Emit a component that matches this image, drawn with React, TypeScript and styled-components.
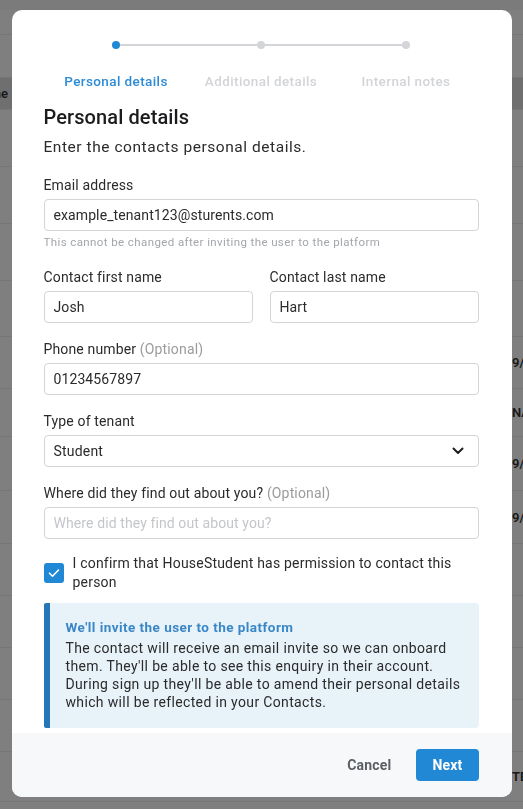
import React from 'react';
import styled, { createGlobalStyle } from 'styled-components';

const GlobalStyle = createGlobalStyle`
  html, body {
    margin: 0;
    padding: 0;
    height: 100%;
    overflow: hidden;
  }
  body {
    font-family: Roboto, "Liberation Sans", Arial, sans-serif;
    background: #ffffff;
    -webkit-font-smoothing: antialiased;
  }
  * {
    box-sizing: border-box;
  }
`;

const ACCENT = '#2188d6';
const LIGHT = '#d4d5d9';

// ---- backdrop page (seen dimmed behind the modal) ----

const Page = styled.div`
  display: flex;
  flex-direction: column;
  width: 523px;
  height: 809px;
  background: #ffffff;
`;

const PageHeader = styled.div`
  height: 10px;
  background: #0f0f0f08;
`;

const PageRow = styled.div<{ $h: number; $shade?: boolean }>`
  display: flex;
  align-items: center;
  justify-content: space-between;
  height: ${({ $h }) => $h}px;
  border-bottom: 1px solid #ececec;
  background: ${({ $shade }) => ($shade ? '#dedede' : '#ffffff')};
  font-size: 13px;
  font-weight: 600;
  color: #333;
`;

const EdgeLeft = styled.div`
  width: 8px;
  overflow: hidden;
  display: flex;
  justify-content: flex-end;
  white-space: nowrap;
`;

const EdgeRight = styled.div`
  width: 11px;
  overflow: hidden;
  white-space: nowrap;
`;

const Dim = styled.div`
  position: fixed;
  inset: 0;
  background: rgba(0, 0, 0, 0.5);
  display: flex;
  justify-content: center;
  align-items: flex-start;
  padding-top: 10px;
`;

// ---- modal ----

const Modal = styled.div`
  width: 500px;
  height: 787px;
  background: #ffffff;
  border-radius: 10px;
  overflow: hidden;
  display: flex;
  flex-direction: column;
  color: #2b2b2b;
`;

const Body = styled.div`
  flex: 1;
  padding: 31px 33px 5px 32px;
  display: flex;
  flex-direction: column;
`;

const Stepper = styled.div`
  position: relative;
  display: grid;
  grid-template-columns: repeat(3, 1fr);

  &::before {
    content: '';
    position: absolute;
    left: 16.66%;
    right: 16.66%;
    top: 3px;
    height: 2px;
    background: ${LIGHT};
  }
`;

const Step = styled.div`
  display: flex;
  flex-direction: column;
  align-items: center;
  gap: 24px;
`;

const Dot = styled.span<{ $active?: boolean }>`
  position: relative;
  width: 8px;
  height: 8px;
  border-radius: 50%;
  background: ${({ $active }) => ($active ? ACCENT : LIGHT)};
`;

const StepLabel = styled.span<{ $active?: boolean }>`
  font-size: 13.5px;
  line-height: 16px;
  font-weight: 500;
  letter-spacing: 0.4px;
  white-space: nowrap;
  color: ${({ $active }) => ($active ? '#2d8bd6' : '#d2d4d8')};
`;

const Heading = styled.h2`
  margin: 16px 0 0;
  font-size: 20px;
  line-height: 24px;
  font-weight: 500;
  color: #1c1c1e;
  letter-spacing: 0.1px;
`;

const Subtitle = styled.p`
  margin: 8px 0 0;
  font-size: 15.5px;
  line-height: 20px;
  letter-spacing: 0.55px;
  color: #2b2b2b;
`;

const Form = styled.div`
  margin-top: 19px;
  display: flex;
  flex-direction: column;
`;

const Field = styled.div<{ $gap?: number }>`
  display: flex;
  flex-direction: column;
  margin-top: ${({ $gap }) => $gap ?? 0}px;
  flex: 1;
`;

const TwoCols = styled.div`
  display: flex;
  gap: 17px;
  margin-top: 19px;
`;

const Label = styled.label`
  font-size: 14px;
  line-height: 18px;
  letter-spacing: 0.15px;
  color: #2b2b2b;
  margin-bottom: 5px;
`;

const Optional = styled.span`
  color: #9b9b9b;
`;

const Input = styled.input`
  height: 32px;
  width: 100%;
  border: 1px solid #d4d5d9;
  border-radius: 4px;
  padding: 0 9px;
  font-family: inherit;
  font-size: 14px;
  letter-spacing: 0.1px;
  color: #2b2b2b;
  background: #fff;
  outline: none;

  &::placeholder {
    color: #c4c6ca;
  }
`;

const Helper = styled.span`
  margin-top: 4px;
  font-size: 11.5px;
  line-height: 14px;
  letter-spacing: 0.4px;
  color: #a3a6ab;
`;

const Select = styled.div`
  height: 32px;
  border: 1px solid #d4d5d9;
  border-radius: 4px;
  padding: 0 14px 0 9px;
  display: flex;
  align-items: center;
  justify-content: space-between;
  font-size: 14px;
  letter-spacing: 0.2px;
  color: #2b2b2b;
`;

const CheckRow = styled.div`
  margin-top: 15px;
  display: flex;
  align-items: center;
  gap: 9px;
`;

const Box = styled.span`
  flex: none;
  width: 20px;
  height: 20px;
  border-radius: 3px;
  background: ${ACCENT};
  display: flex;
  align-items: center;
  justify-content: center;
`;

const CheckText = styled.span`
  font-size: 14px;
  line-height: 19px;
  letter-spacing: 0.2px;
  color: #2b2b2b;
`;

const Notice = styled.div`
  margin-top: 11px;
  background: #e8f2f9;
  border-left: 6px solid #2577b8;
  border-radius: 2px 4px 4px 2px;
  padding: 15px 16px 17px 16px;
`;

const NoticeTitle = styled.div`
  font-size: 13.5px;
  line-height: 18px;
  font-weight: 700;
  letter-spacing: 0.45px;
  color: #3a87c7;
`;

const NoticeBody = styled.p`
  margin: 3px 0 0;
  font-size: 14px;
  line-height: 18px;
  letter-spacing: 0.35px;
  color: #2b2b2b;
`;

const Footer = styled.div`
  height: 64px;
  background: #f7f8fa;
  display: flex;
  align-items: center;
  justify-content: flex-end;
  gap: 9px;
  padding-right: 33px;
`;

const Button = styled.button<{ $primary?: boolean }>`
  height: 32px;
  border: none;
  border-radius: 4px;
  padding: 0 16px;
  font-family: inherit;
  font-size: 14px;
  font-weight: 700;
  letter-spacing: 0.2px;
  cursor: pointer;
  background: ${({ $primary }) => ($primary ? ACCENT : 'transparent')};
  color: ${({ $primary }) => ($primary ? '#ffffff' : '#5b5e63')};
`;

const backdropRows: { h: number; left?: string; right?: string; shade?: boolean }[] = [
  { h: 25 },
  { h: 43 },
  { h: 32, left: 'Name', shade: true },
  { h: 57 },
  { h: 57 },
  { h: 57 },
  { h: 56 },
  { h: 52, right: '9/08/2023' },
  { h: 48, right: 'NA' },
  { h: 54, right: '9/08/2023' },
  { h: 53, right: '9/08/2023' },
  { h: 52 },
  { h: 52 },
  { h: 52 },
  { h: 52 },
  { h: 50, right: 'TENANT' },
];

const Chevron = () => (
  <svg width="12" height="8" viewBox="0 0 12 8" fill="none">
    <path d="M1.5 1.5L6 6l4.5-4.5" stroke="#1f1f1f" strokeWidth="2" strokeLinecap="round" strokeLinejoin="round" />
  </svg>
);

const Tick = () => (
  <svg width="12" height="10" viewBox="0 0 12 10" fill="none">
    <path d="M1.5 5.2l3 3L10.5 2" stroke="#ffffff" strokeWidth="1.6" strokeLinecap="round" strokeLinejoin="round" />
  </svg>
);

const steps = ['Personal details', 'Additional details', 'Internal notes'];

export default function App() {
  return (
    <>
      <GlobalStyle />
      <Page>
        <PageHeader />
        {backdropRows.map((row, i) => (
          <PageRow key={i} $h={row.h} $shade={row.shade}>
            <EdgeLeft>{row.left ?? ''}</EdgeLeft>
            <EdgeRight>{row.right ?? ''}</EdgeRight>
          </PageRow>
        ))}
      </Page>
      <Dim>
        <Modal>
          <Body>
            <Stepper>
              {steps.map((s, i) => (
                <Step key={s}>
                  <Dot $active={i === 0} />
                  <StepLabel $active={i === 0}>{s}</StepLabel>
                </Step>
              ))}
            </Stepper>
            <Heading>Personal details</Heading>
            <Subtitle>Enter the contacts personal details.</Subtitle>
            <Form>
              <Field>
                <Label>Email address</Label>
                <Input defaultValue="example_tenant123@sturents.com" />
                <Helper>This cannot be changed after inviting the user to the platform</Helper>
              </Field>
              <TwoCols>
                <Field>
                  <Label>Contact first name</Label>
                  <Input defaultValue="Josh" />
                </Field>
                <Field>
                  <Label>Contact last name</Label>
                  <Input defaultValue="Hart" />
                </Field>
              </TwoCols>
              <Field $gap={17}>
                <Label>
                  Phone number <Optional>(Optional)</Optional>
                </Label>
                <Input defaultValue="01234567897" />
              </Field>
              <Field $gap={17}>
                <Label>Type of tenant</Label>
                <Select>
                  <span>Student</span>
                  <Chevron />
                </Select>
              </Field>
              <Field $gap={17}>
                <Label>
                  Where did they find out about you? <Optional>(Optional)</Optional>
                </Label>
                <Input placeholder="Where did they find out about you?" />
              </Field>
              <CheckRow>
                <Box>
                  <Tick />
                </Box>
                <CheckText>I confirm that HouseStudent has permission to contact this person</CheckText>
              </CheckRow>
              <Notice>
                <NoticeTitle>We'll invite the user to the platform</NoticeTitle>
                <NoticeBody>
                  The contact will receive an email invite so we can onboard them. They'll be able to see
                  this enquiry in their account. During sign up they'll be able to amend their personal
                  details which will be reflected in your Contacts.
                </NoticeBody>
              </Notice>
            </Form>
          </Body>
          <Footer>
            <Button>Cancel</Button>
            <Button $primary>Next</Button>
          </Footer>
        </Modal>
      </Dim>
    </>
  );
}
